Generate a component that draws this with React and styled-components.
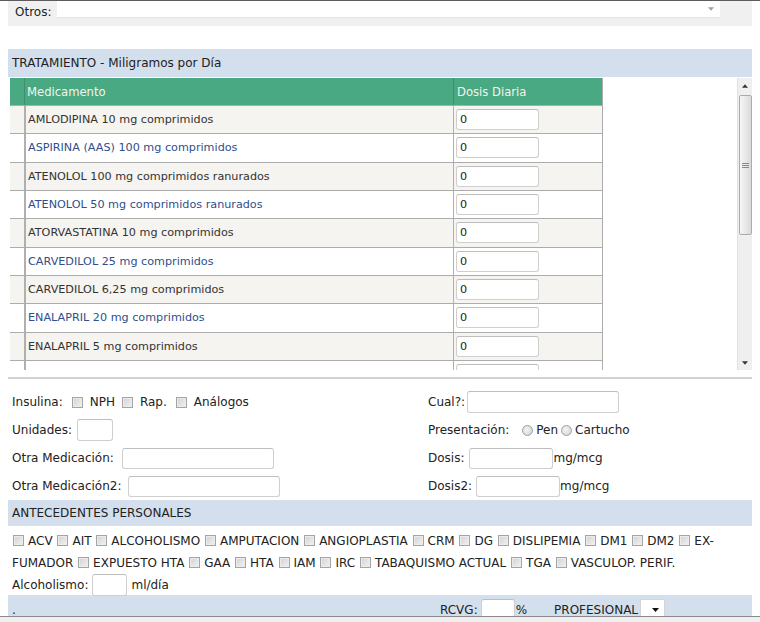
import styled, { createGlobalStyle } from 'styled-components';

const GlobalStyle = createGlobalStyle`
  html, body { margin: 0; padding: 0; background: #fff; }
  body {
    font-family: 'DejaVu Sans', Verdana, sans-serif;
    font-size: 12px;
    color: #333;
  }
  * { box-sizing: border-box; }
`;

const medicamentos = [
  'AMLODIPINA 10 mg comprimidos',
  'ASPIRINA (AAS) 100 mg comprimidos',
  'ATENOLOL 100 mg comprimidos ranurados',
  'ATENOLOL 50 mg comprimidos ranurados',
  'ATORVASTATINA 10 mg comprimidos',
  'CARVEDILOL 25 mg comprimidos',
  'CARVEDILOL 6,25 mg comprimidos',
  'ENALAPRIL 20 mg comprimidos',
  'ENALAPRIL 5 mg comprimidos',
  'FUROSEMIDA 40 mg comprimidos ranurados',
  'GLIBENCLAMIDA 5 mg comprimidos',
  'HIDROCLOROTIAZIDA 25 mg comprimidos',
  'LOSARTAN 50 mg comprimidos',
  'METFORMINA 500 mg comprimidos',
  'METFORMINA 850 mg comprimidos',
  'SIMVASTATINA 20 mg comprimidos',
];

const antecedentes = [
  'ACV', 'AIT', 'ALCOHOLISMO', 'AMPUTACION', 'ANGIOPLASTIA', 'CRM', 'DG',
  'DISLIPEMIA', 'DM1', 'DM2', 'EX-FUMADOR', 'EXPUESTO HTA', 'GAA', 'HTA',
  'IAM', 'IRC', 'TABAQUISMO ACTUAL', 'TGA', 'VASCULOP. PERIF.',
];

const Page = styled.div`
  height: 622px;
  display: flex;
  flex-direction: column;
  overflow: hidden;
  border-top: 1px solid #5c5c5c;
`;

const Content = styled.div`
  flex: 1;
  min-height: 0;
  overflow: hidden;
  padding: 0 8px;
`;

const FrameEdge = styled.div`
  flex: none;
  height: 6px;
  border-top: 1px solid #8a8a8a;
  background: #f0f0f0;
`;

const OtrosStrip = styled.div`
  display: flex;
  align-items: flex-start;
  height: 25px;
  background: #f0f0f0;
  padding-left: 7px;
`;

const Label = styled.span`
  color: #222;
  white-space: nowrap;
  flex: none;
  margin-right: ${(p) => p.$gap ?? 0}px;
`;

const OtrosLabel = styled(Label)`
  padding-top: 4px;
  line-height: 15px;
`;

const Combo = styled.div`
  width: 663px;
  height: 17px;
  margin-left: 6px;
  background: #fff;
  border-bottom: 1px solid #e4e4e4;
  display: flex;
  justify-content: flex-end;
  align-items: center;
  padding-right: 6px;
`;

const SectionHeader = styled.div`
  margin-top: ${(p) => p.$top ?? 0}px;
  height: ${(p) => p.$h ?? 28}px;
  line-height: ${(p) => p.$h ?? 28}px;
  background: #d3dfec;
  padding-left: 4px;
  color: #222;
`;

const ScrollBox = styled.div`
  display: flex;
  height: 292px;
  margin: 1px 0 0 2px;
`;

const Viewport = styled.div`
  flex: 1;
  overflow: hidden;
  background: #fff;
`;

const MedTable = styled.div`
  width: 593px;
  border-right: 1px solid #ababab;
`;

const Row = styled.div`
  display: grid;
  grid-template-columns: 14px 429px 1fr;
  height: ${(p) => (p.$head ? 28 : 28.33)}px;
  font-size: ${(p) => (p.$head ? 11.6 : 11.2)}px;
  border-bottom: 1px solid #acacac;
  background: ${(p) => (p.$head ? '#49a982' : p.$alt ? '#f5f4f0' : '#fff')};
  color: ${(p) => (p.$head ? '#f4f4ec' : p.$alt ? '#333' : '#2f4f8c')};
`;

const Cell = styled.div`
  display: flex;
  align-items: center;
  padding-left: ${(p) => p.$pad ?? 0}px;
  border-left: ${(p) => p.$line ?? 0}px solid ${(p) => (p.$head ? '#3f8f6f' : '#b0b0b0')};
  white-space: nowrap;
  overflow: hidden;
`;

const TextInput = styled.input`
  flex: none;
  width: ${(p) => p.$w}px;
  height: ${(p) => p.$h ?? 22}px;
  border: 1px solid #cfcfcf;
  border-top-color: #bdbdbd;
  border-radius: 3px;
  background: #fff;
  padding: 0 3px;
  font: inherit;
  color: #222;
  margin: 0 ${(p) => p.$mr ?? 0}px 0 ${(p) => p.$ml ?? 0}px;
  outline: none;
`;

const Track = styled.div`
  width: 15px;
  display: flex;
  flex-direction: column;
  align-items: center;
  background: #efefef;
  border-left: 1px solid #e2e2e2;
`;

const ArrowBtn = styled.div`
  height: 15px;
  width: 100%;
  display: flex;
  align-items: center;
  justify-content: center;
  margin-top: ${(p) => (p.$down ? 'auto' : 0)};
`;

const Thumb = styled.div`
  width: 13px;
  height: 140px;
  margin-top: 2px;
  border: 1px solid #ababab;
  border-radius: 2px;
  background: linear-gradient(to right, #f6f6f6, #dadada);
  display: flex;
  flex-direction: column;
  align-items: center;
  justify-content: center;
  gap: 1px;
`;

const Grip = styled.div`
  width: 7px;
  height: 1px;
  background: #8a8a8a;
`;

const Divider = styled.div`
  margin-top: 7px;
  height: 2px;
  background: #d2d2d2;
`;

const FormGrid = styled.div`
  margin-top: 9px;
  display: grid;
  grid-template-columns: 416px 1fr;
  grid-auto-rows: 28px;
  padding-left: 4px;
`;

const Field = styled.div`
  display: flex;
  align-items: center;
  white-space: nowrap;
  color: #222;
`;

const Check = styled.input.attrs({ type: 'checkbox' })`
  appearance: none;
  flex: none;
  width: 11px;
  height: 11px;
  margin: ${(p) => p.$m ?? '0'};
  border: 1px solid #a4a4a4;
  background: linear-gradient(135deg, #d2d2d2, #f2f2f2);
  box-shadow: inset 0 0 0 1px #ececec;
  vertical-align: -1px;
`;

const Radio = styled.input.attrs({ type: 'radio' })`
  appearance: none;
  flex: none;
  width: 11px;
  height: 11px;
  margin: ${(p) => p.$m ?? '0'};
  border: 1px solid #a0a0a0;
  border-radius: 50%;
  background: radial-gradient(circle at 40% 40%, #f4f4f4, #cfcfcf);
`;

const CheckList = styled.div`
  padding: 4px 4px 0;
  line-height: 22px;
  color: #222;
`;

const CheckItem = styled.span`
  white-space: ${(p) => (p.$breakable ? 'normal' : 'nowrap')};
`;

const AlcoholRow = styled.div`
  display: flex;
  align-items: center;
  height: 21px;
  padding-left: 4px;
  color: #222;
`;

const BottomBar = styled.div`
  display: flex;
  align-items: center;
  height: 30px;
  background: #d3dfec;
  padding-left: 4px;
  color: #222;
`;

const DotCell = styled.div`
  width: 428px;
  flex: none;
`;

const Select = styled.div`
  flex: none;
  width: 25px;
  height: 22px;
  margin-left: 2px;
  background: #fff;
  border: 1px solid #d4d4d4;
  display: flex;
  align-items: center;
  justify-content: flex-end;
  padding-right: 5px;
`;

const Tri = ({ up, color = '#333', w = 7 }) => (
  <svg width={w} height={4} viewBox="0 0 7 4">
    <path d={up ? 'M0 4 L3.5 0 L7 4 Z' : 'M0 0 L7 0 L3.5 4 Z'} fill={color} />
  </svg>
);

export default function App() {
  return (
    <>
      <GlobalStyle />
      <Page>
        <Content>
          <OtrosStrip>
            <OtrosLabel>Otros:</OtrosLabel>
            <Combo>
              <Tri color="#a0a0a0" w={6} />
            </Combo>
          </OtrosStrip>

          <SectionHeader $top={23}>TRATAMIENTO - Miligramos por Día</SectionHeader>

          <ScrollBox>
            <Viewport>
              <MedTable>
                <Row $head>
                  <Cell $head />
                  <Cell $head $line={1} $pad={2}>Medicamento</Cell>
                  <Cell $head $line={1} $pad={3}>Dosis Diaria</Cell>
                </Row>
                {medicamentos.map((m, i) => (
                  <Row key={m} $alt={i % 2 === 0}>
                    <Cell />
                    <Cell $line={2} $pad={2}>{m}</Cell>
                    <Cell $line={1} $pad={2}>
                      <TextInput $w={83} $h={21} defaultValue="0" />
                    </Cell>
                  </Row>
                ))}
              </MedTable>
            </Viewport>
            <Track>
              <ArrowBtn><Tri up w={6} /></ArrowBtn>
              <Thumb>
                <Grip />
                <Grip />
                <Grip />
              </Thumb>
              <ArrowBtn $down><Tri w={6} /></ArrowBtn>
            </Track>
          </ScrollBox>

          <Divider />

          <FormGrid>
            <Field>
              <Label $gap={9}>Insulina:</Label>
              <Check $m="0 7px 0 0" />
              <Label $gap={7}>NPH</Label>
              <Check $m="0 7px 0 0" />
              <Label $gap={9}>Rap.</Label>
              <Check $m="0 7px 0 0" />
              <Label>Análogos</Label>
            </Field>
            <Field>
              <Label $gap={2}>Cual?:</Label>
              <TextInput $w={152} />
            </Field>

            <Field>
              <Label $gap={5}>Unidades:</Label>
              <TextInput $w={36} />
            </Field>
            <Field>
              <Label $gap={13}>Presentación:</Label>
              <Radio $m="0 3px 0 0" />
              <Label $gap={3}>Pen</Label>
              <Radio $m="0 3px 0 0" />
              <Label>Cartucho</Label>
            </Field>

            <Field>
              <Label $gap={8}>Otra Medicación:</Label>
              <TextInput $w={152} $h={21} />
            </Field>
            <Field>
              <Label $gap={5}>Dosis:</Label>
              <TextInput $w={84} $h={21} />
              <Label>mg/mcg</Label>
            </Field>

            <Field>
              <Label $gap={7}>Otra Medicación2:</Label>
              <TextInput $w={152} $h={21} />
            </Field>
            <Field>
              <Label $gap={4}>Dosis2:</Label>
              <TextInput $w={84} $h={21} />
              <Label>mg/mcg</Label>
            </Field>
          </FormGrid>

          <SectionHeader $h={26}>ANTECEDENTES PERSONALES</SectionHeader>

          <CheckList>
            {antecedentes.map((a) => (
              <CheckItem key={a} $breakable={a.includes('-')}>
                <Check $m="0 4px 0 1px" />
                {a}{' '}
              </CheckItem>
            ))}
          </CheckList>

          <AlcoholRow>
            <Label $gap={4}>Alcoholismo:</Label>
            <TextInput $w={35} $mr={4} />
            <Label>ml/día</Label>
          </AlcoholRow>

          <BottomBar>
            <DotCell>.</DotCell>
            <Label $gap={3}>RCVG:</Label>
            <TextInput $w={34} $mr={1} />
            <Label $gap={27}>%</Label>
            <Label>PROFESIONAL</Label>
            <Select>
              <Tri color="#111" w={7} />
            </Select>
          </BottomBar>
        </Content>
        <FrameEdge />
      </Page>
    </>
  );
}
